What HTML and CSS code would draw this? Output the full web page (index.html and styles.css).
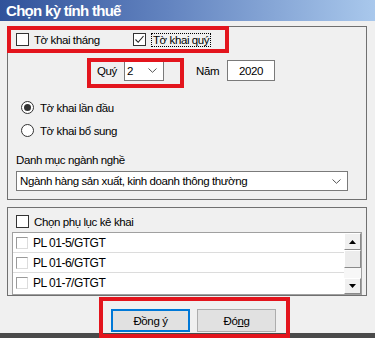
FILE: index.html
```html
<!DOCTYPE html>
<html lang="vi">
<head>
<meta charset="utf-8">
<title>Chọn kỳ tính thuế</title>
<link rel="stylesheet" href="styles.css">
</head>
<body>
<div class="window">
  <div class="titlebar">Chọn kỳ tính thuế</div>
  <div class="content">
    <div class="group group-top">
      <div class="row-checks">
        <label class="chk-item chk-item-first"><span class="chk"></span><span>Tờ khai tháng</span></label>
        <label class="chk-item"><span class="chk">
          <svg width="11" height="11" viewBox="0 0 11 11"><polyline points="1.5,5.5 4.2,8.3 9.5,2" fill="none" stroke="#222" stroke-width="1.1"/></svg>
        </span><span class="focus">Tờ khai quý</span></label>
      </div>
      <div class="row-period">
        <span class="lbl-quy">Quý</span>
        <div class="select-q"><span>2</span>
          <svg class="chev" width="9" height="5" viewBox="0 0 9 5"><polyline points="0.5,0.5 4.5,4.3 8.5,0.5" fill="none" stroke="#555" stroke-width="1"/></svg>
        </div>
        <span class="lbl-nam">Năm</span>
        <div class="input-year">2020</div>
      </div>
      <div class="radio-row radio-first"><span class="radio radio-on"></span><span>Tờ khai lần đầu</span></div>
      <div class="radio-row radio-second"><span class="radio"></span><span>Tờ khai bổ sung</span></div>
      <div class="lbl-danhmuc">Danh mục ngành nghề</div>
      <div class="combo"><span>Ngành hàng sản xuất, kinh doanh thông thường</span>
        <svg class="chev" width="9" height="5" viewBox="0 0 9 5"><polyline points="0.5,0.5 4.5,4.3 8.5,0.5" fill="none" stroke="#555" stroke-width="1"/></svg>
      </div>
    </div>
    <div class="group group-bottom">
      <label class="chk-item chk-phuluc"><span class="chk"></span><span>Chọn phụ lục kê khai</span></label>
      <div class="listbox">
        <div class="list-rows">
          <div class="list-row"><span class="flat-chk"></span><span>PL 01-5/GTGT</span></div>
          <div class="list-row"><span class="flat-chk"></span><span>PL 01-6/GTGT</span></div>
          <div class="list-row list-row-last"><span class="flat-chk"></span><span>PL 01-7/GTGT</span></div>
        </div>
        <div class="scrollbar">
          <div class="sb-btn sb-up"><svg width="7" height="4" viewBox="0 0 7 4"><polygon points="3.5,0 7,4 0,4" fill="#000"/></svg></div>
          <div class="sb-thumb"></div>
          <div class="sb-track"></div>
          <div class="sb-btn sb-down"><svg width="7" height="4" viewBox="0 0 7 4"><polygon points="0,0 7,0 3.5,4" fill="#000"/></svg></div>
        </div>
      </div>
    </div>
    <div class="buttons">
      <div class="btn btn-default"><span>Đồn<u>g</u> ý</span></div>
      <div class="btn"><span>Đó<u>n</u>g</span></div>
    </div>
  </div>
  <div class="bottom-band"></div>
  <div class="hl hl-1"></div>
  <div class="hl hl-2"></div>
  <div class="hl hl-3"></div>
</div>
</body>
</html>
```
FILE: styles.css
```css
* { box-sizing: border-box; }
html, body { margin: 0; padding: 0; background: #f0f0f0; }
.window {
  position: relative;
  width: 375px;
  height: 338px;
  background: #f0f0f0;
  overflow: hidden;
  display: flex;
  flex-direction: column;
  font-family: "Liberation Sans", Arial, sans-serif;
  font-size: 11.5px;
  letter-spacing: -0.4px;
  color: #000;
}
.titlebar {
  height: 21px;
  line-height: 22px;
  padding-left: 6px;
  color: #fff;
  font-weight: bold;
  font-size: 15px;
  letter-spacing: -0.7px;
  background: linear-gradient(to right, #30529a 0%, #6384c0 45%, #a9c8ec 100%);
}
.content {
  padding: 5px 8px 0 7px;
  display: flex;
  flex-direction: column;
}
.group {
  border: 1px solid #707070;
  padding-left: 8px;
}
.group-top { height: 174px; }
.group-bottom { height: 89px; margin-top: 7px; padding-left: 4px; }
.row-checks {
  display: flex;
  align-items: center;
  height: 13px;
  margin-top: 6px;
}
.chk-item { display: flex; align-items: center; gap: 5px; height: 13px; }
.chk-item-first { width: 117px; }
.chk {
  width: 13px; height: 13px;
  border: 1px solid #333;
  background: #fff;
  display: flex; align-items: center; justify-content: center;
  flex: none;
}
.focus {
  border: 1px dotted #000;
  padding: 0 1px;
  line-height: 12px;
}
.row-period {
  display: flex;
  align-items: center;
  height: 21px;
  margin-top: 14px;
  padding-left: 81px;
}
.lbl-quy { width: 27px; }
.select-q {
  width: 40px; height: 21px;
  background: #fff;
  border: 1px solid #7a7a7a;
  display: flex; align-items: center; justify-content: space-between;
  padding: 0 6px 0 2px;
}
.lbl-nam { margin-left: 32px; width: 31px; }
.input-year {
  width: 48px; height: 21px;
  background: #fff;
  border: 1px solid #7a7a7a;
  display: flex; align-items: center; justify-content: center;
}
.radio-row { display: flex; align-items: center; gap: 6px; height: 13px; padding-left: 5px; }
.radio-first { margin-top: 20px; }
.radio-second { margin-top: 10px; }
.radio {
  width: 13px; height: 13px;
  border: 1px solid #333;
  border-radius: 50%;
  background: #fff;
  display: flex; align-items: center; justify-content: center;
  flex: none;
}
.radio-on::after {
  content: "";
  width: 7px; height: 7px;
  border-radius: 50%;
  background: #333;
}
.lbl-danhmuc { margin-top: 16px; height: 14px; line-height: 14px; }
.combo {
  margin-top: 4px;
  width: 332px; height: 20px;
  background: #fff;
  border: 1px solid #7a7a7a;
  display: flex; align-items: center; justify-content: space-between;
  padding: 0 6px 0 3px;
}
.chk-phuluc { margin-top: 7px; margin-left: 4px; }
.listbox {
  margin-top: 4px;
  width: 350px; height: 63px;
  border: 1px solid #a0a0a0;
  background: #fff;
  display: flex;
}
.list-rows { flex: 1; display: flex; flex-direction: column; }
.list-row {
  height: 20px;
  border-bottom: 1px solid #dcdcdc;
  display: flex; align-items: center; gap: 5px;
  padding-left: 3px;
  font-size: 12px;
  letter-spacing: -0.5px;
}
.list-row-last { border-bottom: none; height: 19px; }
.flat-chk {
  width: 12px; height: 12px;
  border: 1px solid;
  border-color: #9a9a9a #dcdcdc #dcdcdc #9a9a9a;
  background: #fff;
  flex: none;
}
.scrollbar {
  width: 17px;
  display: flex; flex-direction: column;
  background: #f4f4f4;
}
.sb-btn {
  background: #f0f0f0;
  border: 1px solid;
  border-color: #fff #8a8a8a #8a8a8a #fff;
  display: flex; align-items: center; justify-content: center;
}
.sb-up { height: 17px; }
.sb-down { height: 16px; }
.sb-thumb {
  height: 18px;
  background: #ececec;
  border: 1px solid;
  border-color: #fff #8a8a8a #8a8a8a #fff;
}
.sb-track { flex: 1; background: #f7f7f7; }
.buttons {
  margin-top: 13px;
  display: flex;
  gap: 7px;
  padding-left: 104px;
}
.btn {
  width: 79px; height: 23px;
  background: #e1e1e1;
  border: 1px solid #adadad;
  display: flex; align-items: center; justify-content: center;
}
.btn-default { border: 2px solid #0078d7; }
.bottom-band {
  margin-top: auto;
  height: 5px;
  background: #4a4a4a;
}
.hl {
  position: absolute;
  border: 4px solid #e3151d;
}
.hl-1 { left: 7px; top: 26px; width: 222px; height: 27px; }
.hl-2 { left: 87px; top: 58px; width: 97px; height: 30px; }
.hl-3 { left: 99px; top: 297px; width: 191px; height: 41px; }
```
